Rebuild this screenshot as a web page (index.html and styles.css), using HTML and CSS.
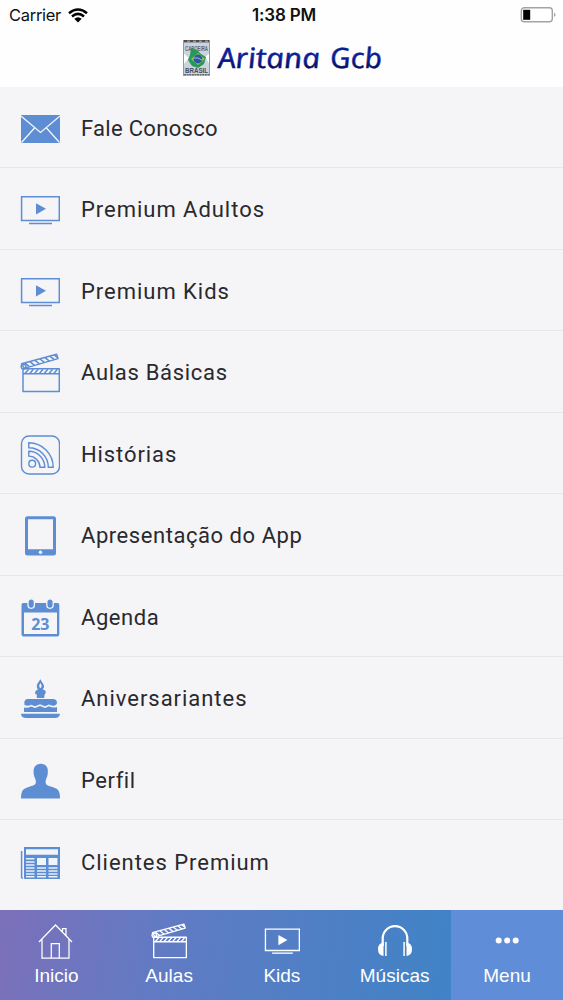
FILE: index.html
```html
<!DOCTYPE html>
<html lang="pt-BR">
<head>
<meta charset="utf-8">
<meta name="viewport" content="width=device-width, initial-scale=1">
<title>Aritana Gcb</title>
<link rel="stylesheet" href="styles.css">
</head>
<body>
<svg class="defs" width="0" height="0" aria-hidden="true">
  <defs>
    <symbol id="tv" viewBox="0 0 40 40">
      <path d="M1.6 6.8H39.3V30.5H1.6Z" fill="none" stroke="currentColor" stroke-width="1.5"/>
      <path d="M9 33.5H32" stroke="currentColor" stroke-width="1.5"/>
      <path d="M16 13.2 26 18.8 16 24.6Z" fill="currentColor"/>
    </symbol>
    <symbol id="clapper" viewBox="0 0 40 40">
      <g fill="none" stroke="currentColor" stroke-width="1.5" stroke-linejoin="round">
        <path d="M3 15.8H39.3V38.4H3Z M3 20.8H39.3"/>
        <path d="M1.6 10.8 36.6 1.2 38 5.6 4.4 15.4Z"/>
        <circle cx="3.6" cy="13.6" r="2.4"/>
        <path d="M5 10.2 9.4 13.6M10 8.8l4.4 3.4M15 7.4l4.4 3.4M20 6l4.4 3.4M25 4.7l4.4 3.4M30 3.3l4.4 3.4M34.4 2.1l3 2.4"/>
        <path d="M5 20.5 8.6 16.2M9.8 20.5l3.6-4.3M14.6 20.5l3.6-4.3M19.4 20.5l3.6-4.3M24.2 20.5l3.6-4.3M29 20.5l3.6-4.3M33.8 20.5l3.6-4.3"/>
      </g>
    </symbol>
  </defs>
</svg>
<div class="app">
  <header class="header">
    <div class="status">
      <div class="carrier">Carrier
        <svg class="wifi" viewBox="0 0 20 15"><path d="M1 5.2Q10-2.3 19 5.2M4 8.5Q10 3.2 16 8.5" fill="none" stroke="#000" stroke-width="2.5"/><path d="M6.3 10.8Q10 7.7 13.7 10.8L10 14.4Z"/></svg>
      </div>
      <div class="clock">1:38 PM</div>
      <svg class="battery" viewBox="0 0 36 16"><rect x="1.3" y=".8" width="31" height="14" rx="3" fill="#fff" stroke="#a3a3a3" stroke-width="1.4"/><rect x="3.2" y="2.8" width="7" height="10"/><path d="M34 5.5q3 2.3 0 4.6Z" fill="#a3a3a3"/></svg>
    </div>
    <div class="brand">
      <svg class="emblem" viewBox="0 0 27 36">
        <rect width="27" height="36" fill="#cbd3db"/>
        <rect width="27" height="2.4" fill="#4d4c50"/>
        <path d="M4 1.2H7M10 1.2H13M16 1.2H19M22 1.2H25" stroke="#b8bbc0" stroke-width="1"/>
        <path d="M0 13 6 18 0 25ZM27 13 22 17 27 25Z" fill="#fff"/>
        <text class="mark" x="2" y="11" textLength="23" lengthAdjust="spacingAndGlyphs">CAPOEIRA</text>
        <path d="M8 8 14 10 18 14 23 17 21 24 15 28 9 26 5 20 7 15Z" fill="#25985b"/>
        <path d="M8 19 15 13 22 19 15 25Z" fill="#a8bc54"/>
        <circle cx="15" cy="19" r="4.4" fill="#265a9b"/>
        <path d="M11 18Q15 17 19 20" stroke="#dae8ed" stroke-width=".7" fill="none"/>
        <path d="M.5 0V36M26.5 0V36" stroke="#92989f" stroke-width="1"/>
        <text class="mark light" x="2" y="32.5" textLength="23" lengthAdjust="spacingAndGlyphs">BRASIL</text>
        <path d="M1 34.7H26" stroke="#65686e" stroke-width="1.6" stroke-dasharray="2 .6"/>
      </svg>
      <svg class="wordmark" viewBox="0 0 168 38" role="img">
        <defs><linearGradient id="ink" x1="0" y1="0" x2="0" y2="1"><stop offset="0" stop-color="#001c70"/><stop offset=".5" stop-color="#0c1f9c"/><stop offset="1" stop-color="#02043c"/></linearGradient></defs>
        <g fill="url(#ink)" stroke="url(#ink)" transform="translate(-4 0) skewX(8)"><text class="hand" x="2" y="28.5" textLength="102" lengthAdjust="spacingAndGlyphs">Aritana</text>
        <text class="hand" x="114" y="28.5" textLength="52" lengthAdjust="spacingAndGlyphs">Gcb</text></g>
      </svg>
    </div>
  </header>
  <main class="list">
    <div class="row"><svg class="icon" viewBox="0 0 40 40"><path d="M1 6H40V34H1Z" fill="currentColor"/><path d="M1 7 20.5 23.5 40 7M1.5 33.5 14.5 19M39.5 33.5 26.5 19" fill="none" stroke="#f5f5fa" stroke-width="1.3"/></svg><span class="label tight">Fale Conosco</span></div>
    <div class="row"><svg class="icon"><use href="#tv"/></svg><span class="label">Premium Adultos</span></div>
    <div class="row"><svg class="icon"><use href="#tv"/></svg><span class="label">Premium Kids</span></div>
    <div class="row"><svg class="icon"><use href="#clapper"/></svg><span class="label snug">Aulas Básicas</span></div>
    <div class="row"><svg class="icon" viewBox="0 0 40 40"><g fill="none" stroke="currentColor" stroke-width="1.4"><rect x="1.5" y="1" width="38" height="38" rx="7.5"/><circle cx="12.2" cy="28.7" r="3.4"/><path d="M8.8 7.8A24.5 24.5 0 0 1 33.2 32.3H28.3A19.5 19.5 0 0 0 8.8 12.8ZM8.8 16.3A16 16 0 0 1 24.8 32.3H20A11.2 11.2 0 0 0 8.8 21.1Z"/></g></svg><span class="label even">Histórias</span></div>
    <div class="row"><svg class="icon" viewBox="0 0 40 40"><path fill-rule="evenodd" fill="currentColor" d="M7.5.3H33.5Q36 .3 36 2.8V37Q36 39.5 33.5 39.5H7.5Q5 39.5 5 37V2.8Q5 .3 7.5 .3ZM8 3.3V33.3H33V3.3Z"/><circle cx="20.5" cy="36.3" r="1.7" fill="#f5f5fa"/></svg><span class="label close">Apresentação do App</span></div>
    <div class="row"><svg class="icon" viewBox="0 0 40 40"><path fill-rule="evenodd" fill="currentColor" d="M3 5H37.5Q39.3 5 39.3 7V36.5Q39.3 38.5 37.3 38.5H3.5Q1.5 38.5 1.5 36.5V7Q1.5 5 3 5ZM4 14.5V36H37V14.5Z"/><g fill="currentColor" stroke="#f5f5fa" stroke-width="1.3"><rect x="8" y=".8" width="6.4" height="9.5" rx="3.2"/><rect x="26.8" y=".8" width="6.4" height="9.5" rx="3.2"/></g><text class="day" x="20.3" y="31.6" text-anchor="middle" textLength="18">23</text></svg><span class="label close">Agenda</span></div>
    <div class="row"><svg class="icon" viewBox="0 0 40 40"><g fill="currentColor"><path fill-rule="evenodd" d="M20.5.3C22 4 24.5 5.5 24 8.2Q23.3 10.8 20.5 11 17.2 10.8 16.8 8 16.5 5 20.5.3ZM20.4 4Q18 7.5 20.5 9.2 22.7 7.5 20.4 4Z"/><path d="M16.8 11Q20.5 8.5 24.2 11 26.5 12 25.5 14.5 24.2 15 24.3 19H16.8V15.5Q14.5 15.5 15.3 12.5Z"/><path d="M7 20H33.5Q37 20.5 37 24 36 27 32.5 26.8L29 25.5 25 27.2 20 25.2 15 27.2 11 25.7Q8 27.8 4.5 26 3.5 21 7 20Z"/><path d="M4 28.5Q8 29.5 11 27.5L15 29 20 27 25 29 29 27.2Q33 29.5 37 28V33H4Z"/><path d="M1 34.7H40Q39.3 39 35 39H6Q1.5 39 1 34.7Z"/></g></svg><span class="label">Aniversariantes</span></div>
    <div class="row"><svg class="icon" viewBox="0 0 40 40"><path fill="currentColor" d="M20.8 2.7C26 2.7 28.3 6.5 27.8 11 27.8 16 25.8 17.5 25.6 20.5 25.5 23.7 27 24.5 31 25.5 37 27.5 40 28 40 37.5H1C1 28 4 27.5 10 25.5 14 24.3 16 23.7 15.9 20.5 15.8 17.5 13.6 16 13.6 11 13.3 6.5 15.5 2.7 20.8 2.7Z"/></svg><span class="label close">Perfil</span></div>
    <div class="row"><svg class="icon" viewBox="0 0 40 40"><path d="M1.6 8V34.5Q1.7 35.3 3 35.3" fill="none" stroke="currentColor" stroke-width="1.5"/><path d="M4 4H40V36H5Q4 36 4 35Z" fill="currentColor"/><path d="M6 6.2H38V11.8H6ZM17 15H26V22H17ZM28.5 15H37.5V22H28.5Z" fill="#f0f4fb"/><path d="M6 15.8H14.5M6 19H14.5M6 22H14.5M6 25H14.5M6 28H14.5M6 31H14.5M6 33.8H14.5M17 25H26M17 28H26M17 31H26M17 33.8H26M28.5 25H37.5M28.5 28H37.5M28.5 31H37.5M28.5 33.8H37.5" stroke="#e9f0fb" stroke-width="1.4"/></svg><span class="label">Clientes Premium</span></div>
  </main>
  <nav class="tabs">
    <div class="tab"><svg class="tab-icon" viewBox="0 0 36 36"><path d="M1 19 17.5 2 34 19M4 16.5V35.2H31V16.5M13.3 35.2V20.5H21.3V35.2M24.5 8.5V5.5H28V12.5" fill="none" stroke="#fff" stroke-width="1.25"/></svg><span>Inicio</span></div>
    <div class="tab"><svg class="tab-icon"><use href="#clapper"/></svg><span>Aulas</span></div>
    <div class="tab"><svg class="tab-icon"><use href="#tv"/></svg><span>Kids</span></div>
    <div class="tab"><svg class="tab-icon" viewBox="0 0 36 36"><path d="M5.7 23V15.5A12.3 12.3 0 0 1 30.3 15.5V23" fill="none" stroke="#fff" stroke-width="2.2"/><path d="M6.5 19.5V33Q1 32.5 1 26.3 1 20.3 6.5 19.5ZM29.5 19.5V33Q35 32.5 35 26.3 35 20.3 29.5 19.5Z" fill="#fff"/><path d="M8.9 19V33M27.1 19V33" stroke="#fff" stroke-width="1.5"/></svg><span>Músicas</span></div>
    <div class="tab active"><svg class="tab-icon" viewBox="0 0 36 36"><g fill="#fff"><circle cx="9.7" cy="17.5" r="3"/><circle cx="18.2" cy="17.5" r="3"/><circle cx="26.7" cy="17.5" r="3"/></g></svg><span>Menu</span></div>
  </nav>
</div>
</body>
</html>
```
FILE: styles.css
```css
* { box-sizing: border-box; }
body { margin: 0; background: #f5f4f7; }
.defs { display: block; }
.app { display: flex; flex-direction: column; width: 563px; height: 1000px; overflow: hidden; }
.header { height: 86.5px; flex: none; background: #fefefe; }
.status { display: grid; grid-template-columns: 1fr auto 1fr; align-items: center; height: 30px; padding: 0 7px 0 9px; font: 17px/20px Inter, sans-serif; color: #111; }
.carrier { display: flex; align-items: center; gap: 7px; font-size: 16.5px; letter-spacing: -.3px; }
.wifi { width: 20px; height: 15px; }
.clock { padding-left: 3px; font-size: 17px; font-weight: 600; letter-spacing: -.2px; }
.battery { justify-self: end; width: 36px; height: 16px; }
.brand { display: flex; justify-content: center; align-items: center; gap: 7px; height: 56px; padding-left: 4px; }
.emblem { width: 27px; height: 36px; }
.wordmark { width: 168px; height: 38px; overflow: visible; }
.hand { font: italic 500 28px "Open Sans", sans-serif; stroke-width: .5; }
.mark { font: bold 7px "Liberation Sans", sans-serif; fill: #59657c; }
.light { fill: #3f4c60; }
.list { flex: none; height: 823.5px; background: #f5f4f7; }
.row { display: flex; align-items: center; gap: 21px; height: 81.5px; padding: 4px 20px 0; border-bottom: 1px solid #e8e8eb; color: #5d8ed3; }
.row:last-child { border-bottom: 0; }
.icon { display: block; flex: none; width: 40px; height: 40px; }
.label { font: 22px/30px Roboto, sans-serif; color: #29292e; letter-spacing: .97px; white-space: nowrap; }
.tight { letter-spacing: .3px; }
.close { letter-spacing: .55px; }
.snug { letter-spacing: .7px; }
.even { letter-spacing: .9px; }
.day { font: bold 16px "Noto Sans", sans-serif; fill: #5d8ed3; }
.tabs { display: grid; grid-template-columns: 1fr 1fr 1fr 1fr 112px; flex: none; height: 90px; background: linear-gradient(100deg, #7b70b9 0%, #607bc4 30%, #4083c6 80%); }
.tab { display: flex; flex-direction: column; align-items: center; padding-top: 13px; gap: 6px; color: #fff; font: 19px/22px "Liberation Sans", sans-serif; }
.tab-icon { display: block; width: 36px; height: 36px; }
.active { background: #5f8dd7; }
```
